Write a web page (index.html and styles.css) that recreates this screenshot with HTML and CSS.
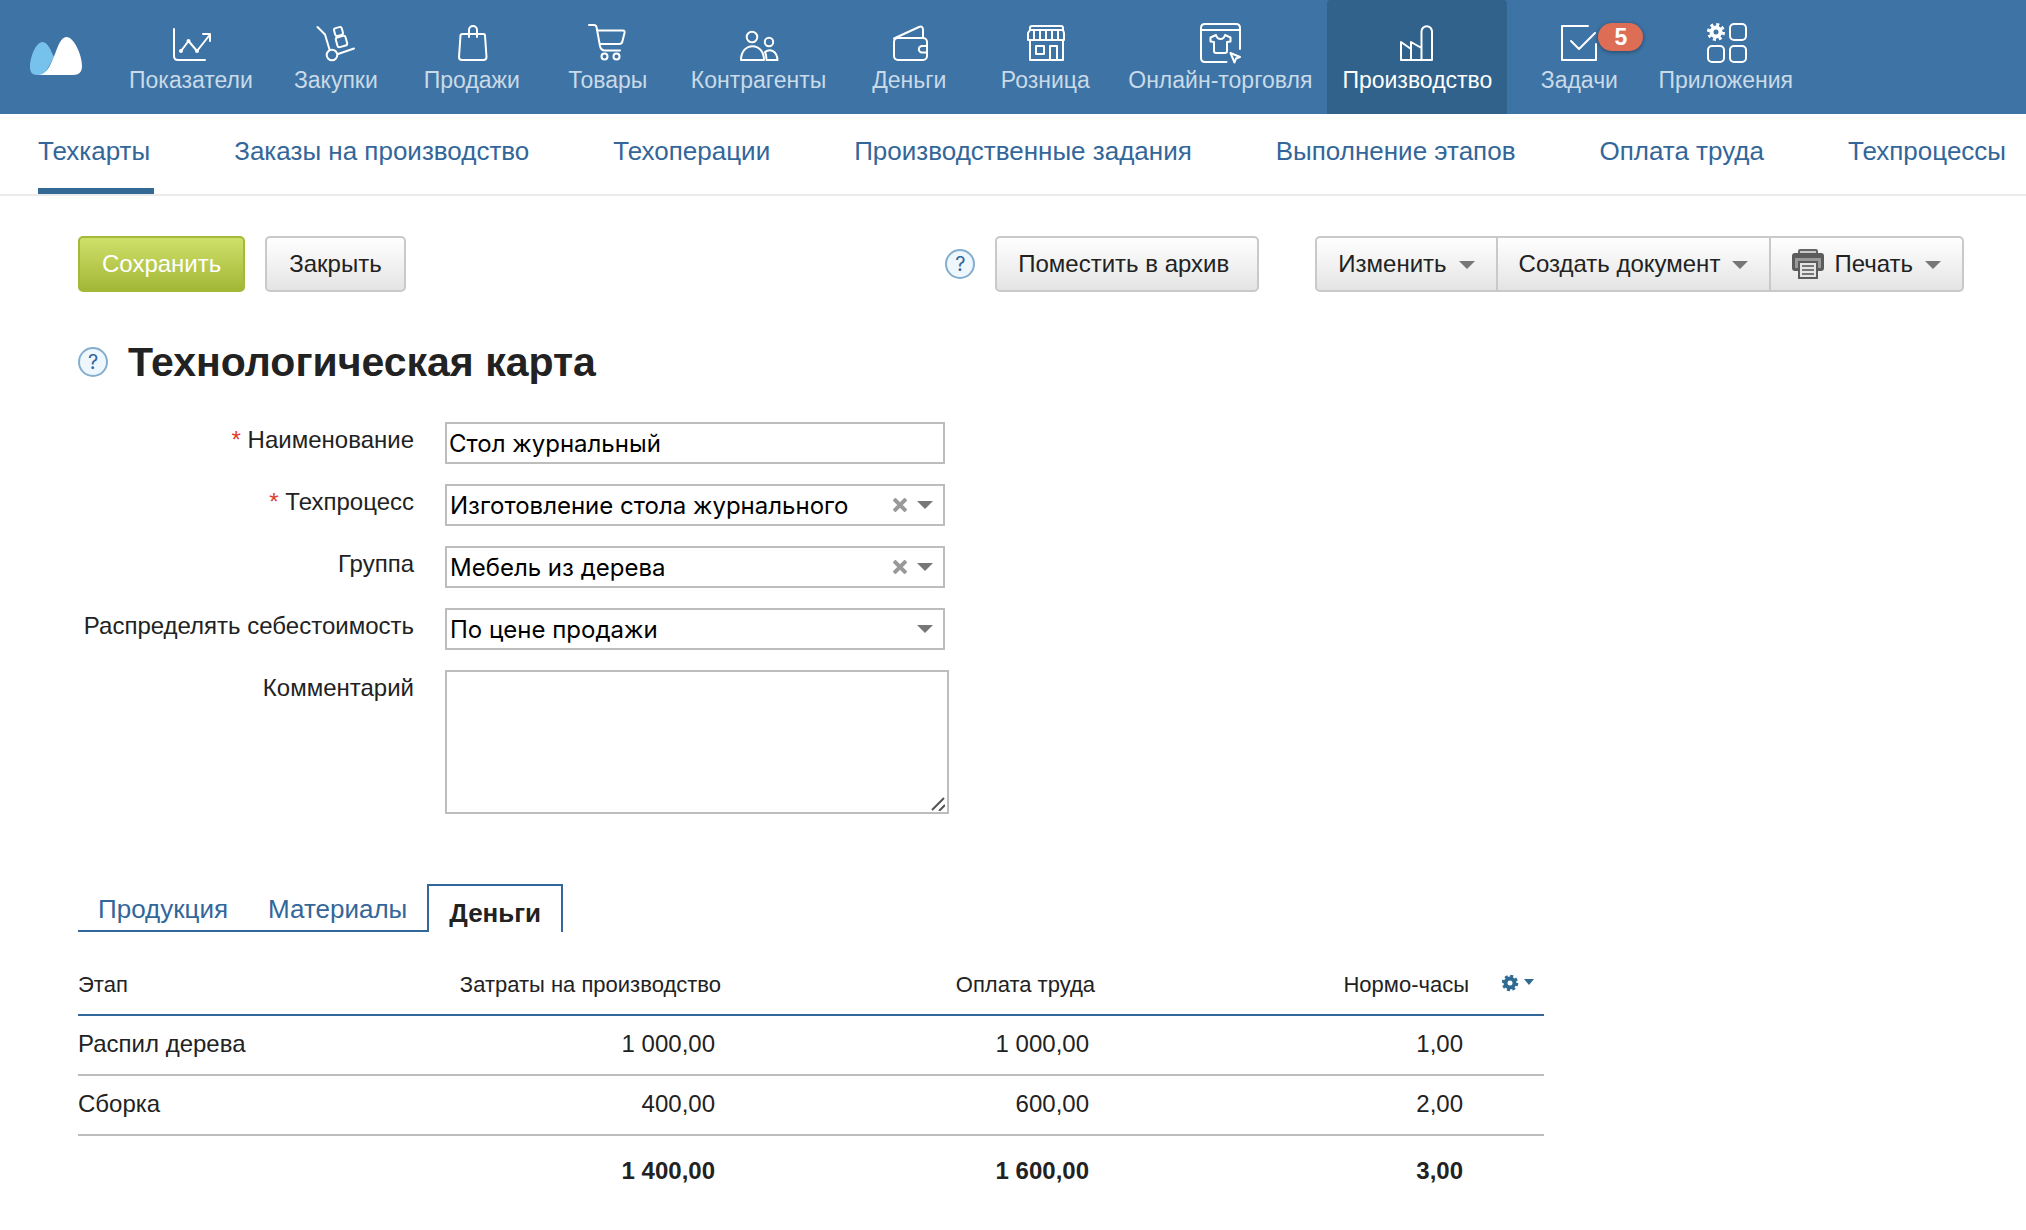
FILE: index.html
```html
<!DOCTYPE html>
<html lang="ru">
<head>
  <meta charset="UTF-8">
  <meta name="viewport" content="width=device-width, initial-scale=1.0">
  <title>Технологическая карта</title>
  <link rel="stylesheet" href="styles.css">
</head>
<body>
  <header class="topbar">
    <a href="#" class="logo" aria-label="На главную">
      <svg width="52" height="38" viewBox="0 0 52 38">
        <path fill="#77c2ed" d="M7 38C2 38 0 35 0 30C0 20 6 5 12.500 5C18 5 21 14 24 20L14 38Z"/>
        <path fill="#fff" d="M9 38C18 37 21 26 25 17C28 9 31 0 36.500 0C44 0 52 18 52 29C52 35 49 38 43 38Z"/>
      </svg>
    </a>
    <nav class="main-nav">
      <a href="#" class="nav-item">
        <svg class="nav-icon" viewBox="0 0 48 44">
          <path d="M7 9V36Q7 40 11 40H38M14 31L21.500 21L30 31L43 14.500M36 14H43V21"/>
          <circle class="solid" cx="14" cy="31" r="2"/><circle class="solid" cx="21.500" cy="21" r="2"/><circle class="solid" cx="30" cy="31" r="2"/>
        </svg>
        <span>Показатели</span>
      </a>
      <a href="#" class="nav-item">
        <svg class="nav-icon" viewBox="0 0 48 44">
          <path d="M5.500 7L13 14.500L17.500 29.500M26 34L42 28.500"/>
          <circle cx="20" cy="35" r="5.300"/>
          <rect x="22.500" y="7.500" width="8" height="8" rx="2" transform="rotate(-15 26.500 11.500)"/>
          <rect x="24.500" y="16.500" width="10" height="10" rx="2" transform="rotate(-15 29.500 21.500)"/>
        </svg>
        <span>Закупки</span>
      </a>
      <a href="#" class="nav-item">
        <svg class="nav-icon" viewBox="0 0 48 44">
          <path d="M14.500 14H35.500Q37 14 37 15.500L38.500 37Q38.500 40 35.500 40H14Q11 40 11 37L12.500 15.500Q12.500 14 14.500 14Z"/>
          <path d="M21 17V10A4 4 0 0 1 29 10V17"/>
        </svg>
        <span>Продажи</span>
      </a>
      <a href="#" class="nav-item">
        <svg class="nav-icon" viewBox="0 0 48 44">
          <path d="M5 5H10Q12 5 12.500 7L16 26Q17 30.500 21 30.500H36M13 10.500H39Q41 10.500 40.500 13L38.500 21Q38 24 35 24H15.500"/>
          <circle cx="20.500" cy="36.500" r="3"/><circle cx="32.500" cy="36.500" r="3"/>
        </svg>
        <span>Товары</span>
      </a>
      <a href="#" class="nav-item">
        <svg class="nav-icon" viewBox="0 0 48 44">
          <circle cx="17" cy="17" r="5.300"/>
          <path d="M6 40C6 21.500 29 21.500 29 40Z"/>
          <circle cx="34" cy="22" r="4.200"/>
          <path d="M30 32C35 28 42 31 42.500 40H31.500C31.500 37 31 34 30 32Z"/>
        </svg>
        <span>Контрагенты</span>
      </a>
      <a href="#" class="nav-item">
        <svg class="nav-icon" viewBox="0 0 48 44">
          <rect x="9" y="18" width="33" height="22" rx="4"/>
          <path d="M9 18.500L34 7Q38 5.500 38 10V18M42 26H37A3.200 3.200 0 0 0 37 32.400H42"/>
        </svg>
        <span>Деньги</span>
      </a>
      <a href="#" class="nav-item">
        <svg class="nav-icon" viewBox="0 0 48 44">
          <path d="M9 10V8Q9 6 11 6H40Q42 6 42 8V10M9 10H42L43 13V20H7V13ZM13 10V20M19 10V20M25 10V20M31 10V20M37 10V20M9 20V40H42V20"/>
          <path d="M15 26H23V34H15ZM29 40V26H36V40"/>
        </svg>
        <span>Розница</span>
      </a>
      <a href="#" class="nav-item">
        <svg class="nav-icon" viewBox="0 0 48 44">
          <path d="M30.500 42H9Q5 42 5 38V8Q5 4 9 4H40Q44 4 44 8V29M5 10H44"/>
          <path d="M20 15L14.500 17.500V21.500L18 22V31Q18 33 20 33H29Q31 33 31 31V22L34.500 21.500V17.500L29 15Q28 19 24.500 19Q21 19 20 15Z"/>
          <path d="M34.500 33L44 37L40 38.500L38.500 42.500Z"/>
        </svg>
        <span>Онлайн-торговля</span>
      </a>
      <a href="#" class="nav-item active">
        <svg class="nav-icon" viewBox="0 0 48 44">
          <path d="M8 40V22L18 29V22L28.500 28M18 40V29M28.500 40V11.500A5.200 5.200 0 0 1 39 11.500V40H8"/>
        </svg>
        <span>Производство</span>
      </a>
      <a href="#" class="nav-item tasks">
        <svg class="nav-icon" viewBox="0 0 48 44">
          <path d="M33 6H7V40H41V24M16 21L24 29L40 13"/>
        </svg>
        <span>Задачи</span>
        <span class="badge">5</span>
      </a>
      <a href="#" class="nav-item">
        <svg class="nav-icon" viewBox="0 0 48 44">
          <rect x="28" y="4" width="16" height="16" rx="4"/>
          <rect x="6" y="26" width="16" height="16" rx="4"/>
          <rect x="28" y="26" width="16" height="16" rx="4"/>
          <circle cx="14" cy="12" r="4.500" stroke-width="4"/>
          <circle cx="14" cy="12" r="7.500" stroke-width="3" stroke-dasharray="3 2.890"/>
        </svg>
        <span>Приложения</span>
      </a>
    </nav>
  </header>

  <nav class="sub-nav">
    <a href="#" class="current">Техкарты</a>
    <a href="#">Заказы на производство</a>
    <a href="#">Техоперации</a>
    <a href="#">Производственные задания</a>
    <a href="#">Выполнение этапов</a>
    <a href="#">Оплата труда</a>
    <a href="#">Техпроцессы</a>
  </nav>

  <main class="content">
    <div class="toolbar">
      <button type="button" class="btn btn-save">Сохранить</button>
      <button type="button" class="btn">Закрыть</button>
      <div class="toolbar-right">
        <button type="button" class="help">?</button>
        <button type="button" class="btn btn-archive">Поместить в архив</button>
        <div class="btn-group">
          <button type="button" class="btn">Изменить <i class="caret"></i></button>
          <button type="button" class="btn">Создать документ <i class="caret"></i></button>
          <button type="button" class="btn">
            <svg class="printer" width="32" height="30" viewBox="0 0 32 30">
              <path fill="#c8c8c8" stroke="#666" stroke-width="2" d="M7 5V2Q7 1 8 1H24Q25 1 25 2V5"/>
              <path fill="#5c5c5c" d="M3 4H29Q32 4 32 7V19Q32 22 29 22H3Q0 22 0 19V7Q0 4 3 4Z"/>
              <path fill="#999" d="M3 9H29V19H3Z"/>
              <path fill="#e4e4e4" stroke="#5c5c5c" stroke-width="2" d="M7 13H25V29H7Z"/>
              <path stroke="#777" stroke-width="2" d="M10 17H22M10 21H22M10 25H22"/>
            </svg>
            Печать <i class="caret"></i>
          </button>
        </div>
      </div>
    </div>

    <div class="title">
      <button type="button" class="help">?</button>
      <h1>Технологическая карта</h1>
    </div>

    <form class="card-form">
      <label for="name"><span class="required">*</span> Наименование</label>
      <input type="text" id="name" class="field" value="Стол журнальный">

      <label for="process"><span class="required">*</span> Техпроцесс</label>
      <div class="combo">
        <select id="process" class="field"><option>Изготовление стола журнального</option></select>
        <div class="combo-icons">
          <button type="button" class="clear" aria-label="Очистить"><svg width="14" height="14" viewBox="0 0 14 14"><path d="M1 1L13 13M13 1L1 13"/></svg></button>
          <i class="caret"></i>
        </div>
      </div>

      <label for="group">Группа</label>
      <div class="combo">
        <select id="group" class="field"><option>Мебель из дерева</option></select>
        <div class="combo-icons">
          <button type="button" class="clear" aria-label="Очистить"><svg width="14" height="14" viewBox="0 0 14 14"><path d="M1 1L13 13M13 1L1 13"/></svg></button>
          <i class="caret"></i>
        </div>
      </div>

      <label for="cost">Распределять себестоимость</label>
      <div class="combo">
        <select id="cost" class="field"><option>По цене продажи</option></select>
        <div class="combo-icons"><i class="caret"></i></div>
      </div>

      <label for="comment">Комментарий</label>
      <div class="comment">
        <textarea id="comment" class="field"></textarea>
        <svg class="grip" width="14" height="14" viewBox="0 0 14 14"><path d="M1 13L13 1M8 14L14 8"/></svg>
      </div>
    </form>

    <div class="tabs">
      <a href="#" class="tab">Продукция</a>
      <a href="#" class="tab">Материалы</a>
      <a href="#" class="tab tab-active">Деньги</a>
    </div>

    <table class="costs">
      <thead>
        <tr>
          <th class="col-stage">Этап</th>
          <th class="col-sum">Затраты на производство</th>
          <th class="col-sum">Оплата труда</th>
          <th class="col-sum">Нормо-часы</th>
          <th class="col-settings">
            <button type="button" class="settings" aria-label="Настройка столбцов">
              <svg width="32" height="18" viewBox="0 0 32 18">
                <circle cx="8" cy="9" r="4.500" fill="none" stroke="#2f6a91" stroke-width="4"/>
                <circle cx="8" cy="9" r="7" fill="none" stroke="#2f6a91" stroke-width="2.500" stroke-dasharray="3 2.500"/>
                <path fill="#2f6a91" d="M22 5H32L27 11Z"/>
              </svg>
            </button>
          </th>
        </tr>
      </thead>
      <tbody>
        <tr><td>Распил дерева</td><td>1 000,00</td><td>1 000,00</td><td>1,00</td><td></td></tr>
        <tr><td>Сборка</td><td>400,00</td><td>600,00</td><td>2,00</td><td></td></tr>
      </tbody>
      <tfoot>
        <tr><td></td><td>1 400,00</td><td>1 600,00</td><td>3,00</td><td></td></tr>
      </tfoot>
    </table>
  </main>
</body>
</html>
```

FILE: styles.css
```css
* {
  box-sizing: border-box;
}
body {
  margin: 0;
  font-family: "Liberation Sans", Arial, sans-serif;
  font-size: 24px;
  color: #222;
  background: #fff;
}
a {
  text-decoration: none;
}
button, input, select, textarea {
  font: inherit;
}

/* Top bar */
.topbar {
  display: flex;
  height: 114px;
  background: #3d73a5;
}
.logo {
  padding: 37px 32px 0 30px;
}
.logo svg {
  display: block;
}
.main-nav {
  display: flex;
}
.nav-item {
  position: relative;
  display: flex;
  flex-direction: column;
  align-items: center;
  gap: 2px;
  min-width: 136px;
  padding: 20px 15px 0;
  font-size: 23px;
  line-height: 28px;
  color: #c9dae8;
  white-space: nowrap;
}
.nav-item.active {
  background: #30628b;
  border-radius: 4px 4px 0 0;
  color: #fff;
}
.nav-item.tasks {
  padding-left: 23px;
}
.nav-icon {
  width: 48px;
  height: 44px;
  fill: none;
  stroke: #fff;
  stroke-width: 2;
  stroke-linejoin: round;
  stroke-linecap: round;
}
.nav-icon .solid {
  fill: #fff;
  stroke: none;
}
.nav-icon [stroke-dasharray] {
  stroke-linecap: butt;
}
.badge {
  position: absolute;
  top: 23px;
  right: 0;
  width: 45px;
  height: 28px;
  border-radius: 14px;
  background: #dd6e55;
  box-shadow: 0 1px 4px rgba(0, 0, 0, 0.4);
  color: #fff;
  font-weight: bold;
  text-align: center;
}

/* Section links */
.sub-nav {
  display: flex;
  gap: 80px;
  padding-left: 38px;
  border-bottom: 2px solid #ebebeb;
  font-size: 26px;
  line-height: 74px;
  white-space: nowrap;
}
.sub-nav a {
  padding-right: 4px;
  color: #336699;
  border-bottom: 6px solid transparent;
}
.sub-nav .current {
  border-color: #336994;
}

.content {
  padding: 40px 62px 30px 78px;
}

/* Buttons */
.toolbar {
  display: flex;
  gap: 20px;
}
.toolbar-right {
  display: flex;
  align-items: center;
  gap: 20px;
  margin-left: auto;
}
.btn {
  display: flex;
  align-items: center;
  height: 56px;
  padding: 0 21px;
  border: 2px solid #c9c9c9;
  border-radius: 5px;
  background: linear-gradient(#fff, #e4e4e4);
  color: #222;
  white-space: nowrap;
}
.toolbar > .btn {
  padding: 0 22px;
}
.btn-save {
  border-color: #a5b939;
  background: linear-gradient(#cfe06a, #a3b736);
  color: #fff;
}
.btn-archive {
  padding-right: 28px;
  margin-right: 36px;
}
.btn-group {
  display: flex;
}
.btn-group .btn {
  border-radius: 0;
}
.btn-group .btn + .btn {
  border-left: 0;
}
.btn-group .btn:first-child {
  border-radius: 5px 0 0 5px;
}
.btn-group .btn:last-child {
  border-radius: 0 5px 5px 0;
}
.caret {
  border: 8px solid transparent;
  border-top-color: #777;
  border-bottom: 0;
}
.btn .caret {
  margin: 2px 0 0 12px;
}
.printer {
  margin-right: 10px;
}
.help {
  width: 30px;
  height: 30px;
  padding: 0;
  border: 2px solid #84aece;
  border-radius: 50%;
  background: #eff7fe;
  color: #336699;
  font-family: Inter, sans-serif;
  font-size: 20px;
  line-height: 26px;
}

.title {
  display: flex;
  align-items: center;
  gap: 20px;
  margin: 46px 0 36px;
}
h1 {
  margin: 0;
  font-size: 41px;
  line-height: 48px;
}

/* Form */
.card-form {
  display: grid;
  grid-template-columns: 336px 504px;
  gap: 20px 31px;
}
.card-form label {
  line-height: 36px;
  text-align: right;
  white-space: nowrap;
}
.required {
  color: #e03c2d;
}
.field {
  display: block;
  width: 500px;
  height: 42px;
  padding: 0 3px;
  border: 2px solid #bdbdbd;
  border-radius: 0;
  background: #fff;
  color: #000;
  font-family: Inter, sans-serif;
  appearance: none;
}
input.field {
  padding: 0 2px;
}
.combo, .comment {
  position: relative;
}
.combo {
  width: 500px;
}
.combo-icons {
  position: absolute;
  top: 0;
  right: 12px;
  display: flex;
  align-items: center;
  gap: 10px;
  height: 42px;
}
.clear {
  padding: 0;
  border: 0;
  background: none;
}
.clear svg {
  display: block;
  stroke: #999;
  stroke-width: 4;
}
textarea.field {
  width: 504px;
  height: 144px;
  resize: none;
}
.grip {
  position: absolute;
  right: 4px;
  bottom: 3px;
  fill: none;
  stroke: #555;
  stroke-width: 2;
}

/* Tabs */
.tabs {
  display: flex;
  align-items: flex-end;
  margin-top: 70px;
  font-size: 26px;
}
.tab {
  height: 40px;
  padding: 0 20px;
  border-bottom: 2px solid #336699;
  color: #336699;
  line-height: 34px;
}
.tab-active {
  height: 48px;
  border: 2px solid #336699;
  border-bottom: 0;
  color: #222;
  font-weight: bold;
  line-height: 54px;
}

/* Costs table */
.costs {
  margin-top: 30px;
  border-collapse: collapse;
  table-layout: fixed;
  width: 1466px;
  max-width: 100%;
}
.costs th {
  height: 53px;
  padding: 0 6px 6px 0;
  border-bottom: 2px solid #336699;
  font-size: 22px;
  font-weight: normal;
  text-align: right;
  white-space: nowrap;
}
.costs .col-stage {
  width: 275px;
  text-align: left;
}
.costs .col-sum {
  width: 374px;
}
.costs .col-settings {
  padding-right: 10px;
}
.costs td {
  height: 60px;
  padding: 0 12px 3px 0;
  border-bottom: 2px solid #bdbdbd;
  text-align: right;
}
.costs td:first-child {
  text-align: left;
}
.costs tfoot td {
  height: 74px;
  border-bottom: 0;
  font-weight: bold;
}
.settings {
  padding: 0;
  border: 0;
  background: none;
}
```
